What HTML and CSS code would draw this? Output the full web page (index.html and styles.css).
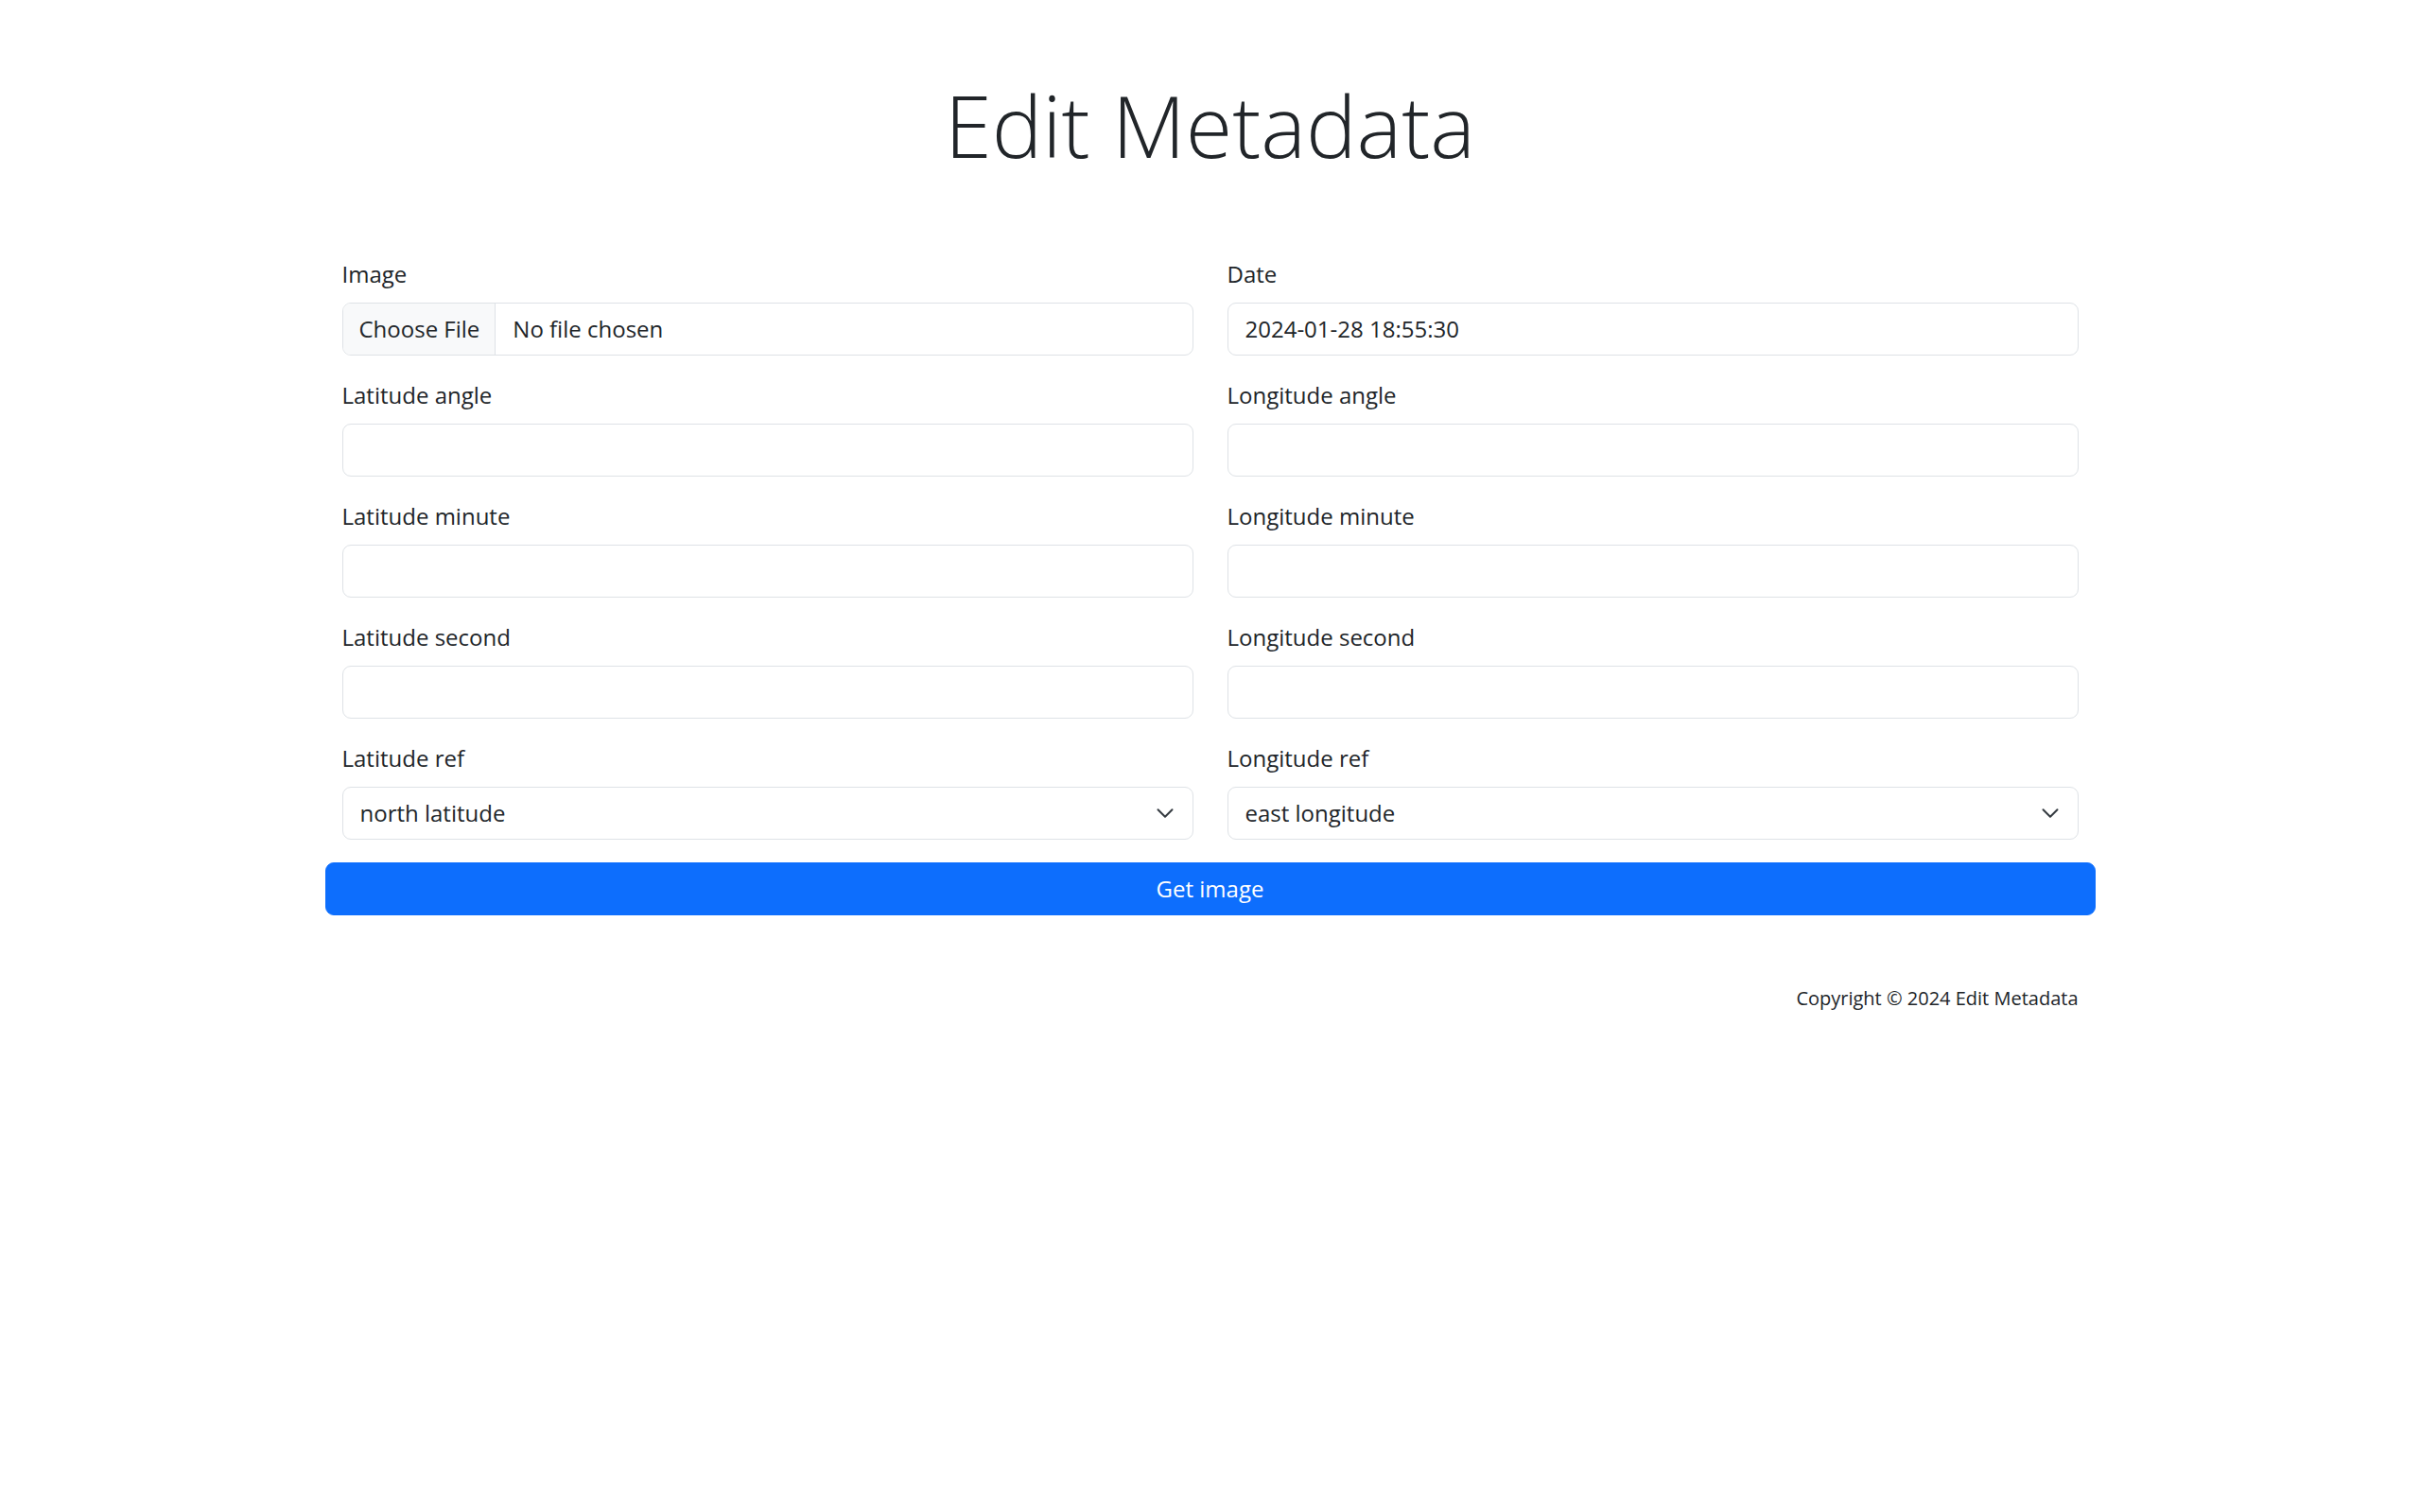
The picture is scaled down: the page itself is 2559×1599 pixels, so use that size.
FILE: index.html
```html
<!DOCTYPE html>
<html lang="en">
<head>
  <meta charset="UTF-8">
  <meta name="viewport" content="width=device-width, initial-scale=1.0">
  <title>Edit Metadata</title>
  <link rel="stylesheet" href="styles.css">
</head>
<body>
  <div class="page">
    <h1 class="title">Edit Metadata</h1>

    <form class="meta-form" onsubmit="return false">
      <div class="fields">
        <div class="field">
          <label class="form-label" for="image">Image</label>
          <label class="control file-control" for="image">
            <input type="file" id="image" class="file-hidden">
            <span class="file-btn">Choose File</span>
            <span class="file-name">No file chosen</span>
          </label>
        </div>
        <div class="field">
          <label class="form-label" for="date">Date</label>
          <input type="text" id="date" class="control" value="2024-01-28 18:55:30">
        </div>

        <div class="field">
          <label class="form-label" for="latAngle">Latitude angle</label>
          <input type="text" id="latAngle" class="control">
        </div>
        <div class="field">
          <label class="form-label" for="lonAngle">Longitude angle</label>
          <input type="text" id="lonAngle" class="control">
        </div>

        <div class="field">
          <label class="form-label" for="latMinute">Latitude minute</label>
          <input type="text" id="latMinute" class="control">
        </div>
        <div class="field">
          <label class="form-label" for="lonMinute">Longitude minute</label>
          <input type="text" id="lonMinute" class="control">
        </div>

        <div class="field">
          <label class="form-label" for="latSecond">Latitude second</label>
          <input type="text" id="latSecond" class="control">
        </div>
        <div class="field">
          <label class="form-label" for="lonSecond">Longitude second</label>
          <input type="text" id="lonSecond" class="control">
        </div>

        <div class="field">
          <label class="form-label" for="latRef">Latitude ref</label>
          <div class="select-wrap">
            <select id="latRef" class="control select">
              <option>north latitude</option>
              <option>south latitude</option>
            </select>
            <svg class="chevron" viewBox="0 0 16 16" aria-hidden="true">
              <path d="M2 5l6 6 6-6" fill="none" stroke="#343a40" stroke-width="1.6" stroke-linecap="round" stroke-linejoin="round"/>
            </svg>
          </div>
        </div>
        <div class="field">
          <label class="form-label" for="lonRef">Longitude ref</label>
          <div class="select-wrap">
            <select id="lonRef" class="control select">
              <option>east longitude</option>
              <option>west longitude</option>
            </select>
            <svg class="chevron" viewBox="0 0 16 16" aria-hidden="true">
              <path d="M2 5l6 6 6-6" fill="none" stroke="#343a40" stroke-width="1.6" stroke-linecap="round" stroke-linejoin="round"/>
            </svg>
          </div>
        </div>
      </div>

      <button type="submit" class="submit-button">Get image</button>
    </form>

    <footer class="footer">Copyright © 2024 Edit Metadata</footer>
  </div>
</body>
</html>
```

FILE: styles.css
```css
:root {
  --text: #212529;
  --border: #dee2e6;
  --primary: #0d6efd;
  --file-bg: #f8f9fa;
}

body {
  margin: 0;
  font-family: 'Open Sans', 'Noto Sans', sans-serif;
  font-size: 24px;
  line-height: 1.5;
  color: var(--text);
  background: #ffffff;
}

.page {
  width: 1872px;
  margin: 0 auto;
}

.title {
  margin: 78px 0 86px;
  font-size: 90px;
  font-weight: 300;
  line-height: 1.2;
  text-align: center;
}

.fields {
  display: grid;
  grid-template-columns: 1fr 1fr;
  column-gap: 36px;
  padding: 0 18px;
}

.field {
  margin-bottom: 24px;
}

.form-label {
  display: block;
  margin-bottom: 12px;
}

.control {
  display: block;
  width: 100%;
  box-sizing: border-box;
  padding: 9px 18px;
  font-family: inherit;
  font-size: 24px;
  line-height: 1.5;
  color: var(--text);
  background: #ffffff;
  border: 1px solid var(--border);
  border-radius: 9px;
  outline: none;
}

.file-control {
  display: flex;
  padding: 0;
  overflow: hidden;
  cursor: pointer;
}

.file-hidden {
  display: none;
}

.file-btn {
  padding: 9px 16px 9px 17px;
  background: var(--file-bg);
  border-right: 1px solid var(--border);
}

.file-name {
  padding: 9px 18px;
}

.select-wrap {
  position: relative;
}

.select {
  appearance: none;
  -webkit-appearance: none;
  padding-right: 54px;
}

.chevron {
  position: absolute;
  right: 20px;
  top: 50%;
  width: 20px;
  height: 20px;
  margin-top: -10px;
  pointer-events: none;
}

.submit-button {
  display: block;
  width: 100%;
  padding: 9px 18px;
  font-family: inherit;
  font-size: 24px;
  line-height: 1.5;
  color: #ffffff;
  background: var(--primary);
  border: 1px solid var(--primary);
  border-radius: 9px;
  cursor: pointer;
}

.footer {
  margin-top: 73px;
  padding-right: 18px;
  font-size: 20px;
  text-align: right;
}
```
